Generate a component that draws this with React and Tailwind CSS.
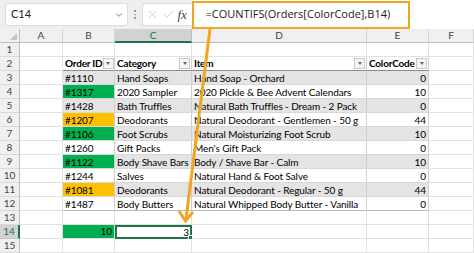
import { X, Check, ChevronDown } from "lucide-react";

const rows = [
  { id: "#1110", cat: "Hand Soaps", item: "Hand Soap - Orchard", code: 0 },
  { id: "#1317", cat: "2020 Sampler", item: "2020 Pickle & Bee Advent Calendars", code: 10 },
  { id: "#1428", cat: "Bath Truffles", item: "Natural Bath Truffles - Dream - 2 Pack", code: 0 },
  { id: "#1207", cat: "Deodorants", item: "Natural Deodorant - Gentlemen - 50 g", code: 44 },
  { id: "#1106", cat: "Foot Scrubs", item: "Natural Moisturizing Foot Scrub", code: 10 },
  { id: "#1260", cat: "Gift Packs", item: "Men's Gift Pack", code: 0 },
  { id: "#1122", cat: "Body Shave Bars", item: "Body / Shave Bar - Calm", code: 10 },
  { id: "#1244", cat: "Salves", item: "Natural Hand & Foot Salve", code: 0 },
  { id: "#1081", cat: "Deodorants", item: "Natural Deodorant - Regular - 50 g", code: 44 },
  { id: "#1487", cat: "Body Butters", item: "Natural Whipped Body Butter - Vanilla", code: 0 },
];

const fills = { 10: "bg-[#00b050]", 44: "bg-[#ffc000]" };

const RowHead = ({ n, active }) => (
  <div
    className={`flex h-[14px] items-center justify-center border-b border-r text-[10px] ${
      active ? "border-b-[#c6c6c6] border-r-2 border-r-[#217346] bg-[#d2d2d2] text-[#217346]" : "border-b-[#dadada] border-r-[#bdbdbd] bg-[#f0f0f0] text-[#444]"
    }`}
  >
    {n}
  </div>
);

const Blank = () => <div className="h-[14px] border-b border-r border-[#e1e1e1] bg-white" />;

const Filter = () => (
  <span className="ml-auto mr-[1px] flex h-[11px] w-[11px] shrink-0 items-center justify-center border border-[#c9c9c9] bg-[#f4f4f4]">
    <span className="h-0 w-0 border-x-[2.5px] border-t-[3px] border-x-transparent border-t-[#666]" />
  </span>
);

const TCell = ({ children, band, right, fill, last }) => (
  <div
    className={`flex h-[14px] items-center overflow-hidden whitespace-nowrap border-b border-r px-[2px] text-[10px] tracking-[-0.1px] leading-none text-black ${
      right ? "justify-end" : ""
    } ${fill ? fill : band ? "bg-[#e4e4e4]" : "bg-white"} ${last ? "border-b-[#b9b9b9]" : "border-b-[#d8d8d8]"} border-r-[#cfcfcf]`}
  >
    {children}
  </div>
);

const Head = ({ children }) => (
  <div className="flex h-[14px] items-center overflow-hidden whitespace-nowrap border-b border-r border-b-[#8c8c8c] border-r-[#cfcfcf] pl-[2px] text-[10px] font-bold tracking-[-0.2px]">
    {children}
    <Filter />
  </div>
);

export default function App() {
  return (
    <div className="relative h-[253px] w-[474px] overflow-hidden bg-white font-['Lato','Liberation_Sans',sans-serif]">
      {/* formula bar */}
      <div className="flex h-[29px] items-center bg-[#efefef] pl-[5px]">
        <div className="flex h-[23px] w-[123px] items-center rounded-[3px] border border-[#dcdcdc] bg-white pl-[5px] pr-[3px] text-[11px] text-[#222]">
          C14
          <ChevronDown className="ml-auto h-[10px] w-[10px] text-[#666]" strokeWidth={2} />
        </div>
        <div className="mx-[6px] flex flex-col gap-[2px]">
          <span className="h-[1.5px] w-[1.5px] bg-[#999]" />
          <span className="h-[1.5px] w-[1.5px] bg-[#999]" />
          <span className="h-[1.5px] w-[1.5px] bg-[#999]" />
        </div>
        <div className="flex h-[23px] w-[50px] items-center gap-[3px] rounded-l-[3px] border border-r-0 border-[#dcdcdc] bg-white pl-[3px]">
          <X className="h-[13px] w-[13px] text-[#bdbdbd]" strokeWidth={1.4} />
          <Check className="h-[13px] w-[13px] text-[#bdbdbd]" strokeWidth={1.4} />
          <span className="font-['Liberation_Serif',serif] text-[13px] italic text-[#444]">fx</span>
        </div>
        <div className="relative flex h-[29px] flex-1 items-center bg-white">
          <div className="flex h-[28px] w-[218px] items-center border-2 border-[#f2a51f] pl-[12px] font-['Open_Sans',sans-serif] text-[11px] text-[#222]">
            =COUNTIFS(Orders[ColorCode],B14)
          </div>
        </div>
      </div>

      {/* sheet */}
      <div className="grid grid-cols-[20px_43px_52px_77px_175px_62px_45px]">
        {/* column headers */}
        <div className="relative h-[14px] border-b border-r border-[#bdbdbd] bg-[#f0f0f0]">
          <span className="absolute bottom-[2px] right-[2px] h-0 w-0 border-b-[7px] border-l-[7px] border-b-[#c4c4c4] border-l-transparent" />
        </div>
        {["A", "B", "C", "D", "E", "F"].map((c) => (
          <div
            key={c}
            className={`flex h-[14px] items-center justify-center border-r text-[10px] ${
              c === "C"
                ? "border-b-2 border-b-[#217346] border-r-[#bdbdbd] bg-[#d2d2d2] text-[#217346]"
                : "border-b border-b-[#bdbdbd] border-r-[#d4d4d4] bg-[#f0f0f0] text-[#444]"
            }`}
          >
            {c}
          </div>
        ))}

        {/* row 1 */}
        <RowHead n={1} />
        {[0, 1, 2, 3, 4, 5].map((i) => (
          <Blank key={i} />
        ))}

        {/* row 2 - table header */}
        <RowHead n={2} />
        <Blank />
        <Head>Order ID</Head>
        <Head>Category</Head>
        <Head>Item</Head>
        <Head>ColorCode</Head>
        <Blank />

        {/* table body */}
        {rows.map((r, i) => {
          const band = i % 2 === 0;
          const last = i === rows.length - 1;
          return [
            <RowHead key={`h${i}`} n={i + 3} />,
            <Blank key={`a${i}`} />,
            <TCell key={`b${i}`} band={band} last={last} fill={fills[r.code]}>
              {r.id}
            </TCell>,
            <TCell key={`c${i}`} band={band} last={last}>
              {r.cat}
            </TCell>,
            <TCell key={`d${i}`} band={band} last={last}>
              {r.item}
            </TCell>,
            <TCell key={`e${i}`} band={band} last={last} right>
              {r.code}
            </TCell>,
            <Blank key={`f${i}`} />,
          ];
        })}

        {/* row 13 */}
        <RowHead n={13} />
        {[0, 1, 2, 3, 4, 5].map((i) => (
          <Blank key={i} />
        ))}

        {/* row 14 - result */}
        <RowHead n={14} active />
        <Blank />
        <div className="flex h-[14px] items-center justify-end border-b border-r border-[#e1e1e1] bg-[#00b050] pr-[2px] text-[10px]">
          10
        </div>
        <div className="relative flex h-[14px] items-center justify-end border-2 border-[#217346] bg-white pr-[1px] text-[10px]">
          3
          <span className="absolute -bottom-[3px] -right-[3px] h-[5px] w-[5px] border border-white bg-[#217346]" />
        </div>
        <Blank />
        <Blank />
        <Blank />

        {/* row 15 */}
        <RowHead n={15} />
        {[0, 1, 2, 3, 4, 5].map((i) => (
          <Blank key={i} />
        ))}
      </div>

      {/* callout arrow from formula to result cell */}
      <svg className="pointer-events-none absolute left-0 top-0" width="474" height="253" viewBox="0 0 474 253">
        <line x1="210" y1="29" x2="186" y2="219" stroke="#f2a51f" strokeWidth="3" />
        <polyline points="179,211 185.5,221 193,212" fill="none" stroke="#f2a51f" strokeWidth="3" strokeLinejoin="miter" />
      </svg>
    </div>
  );
}
